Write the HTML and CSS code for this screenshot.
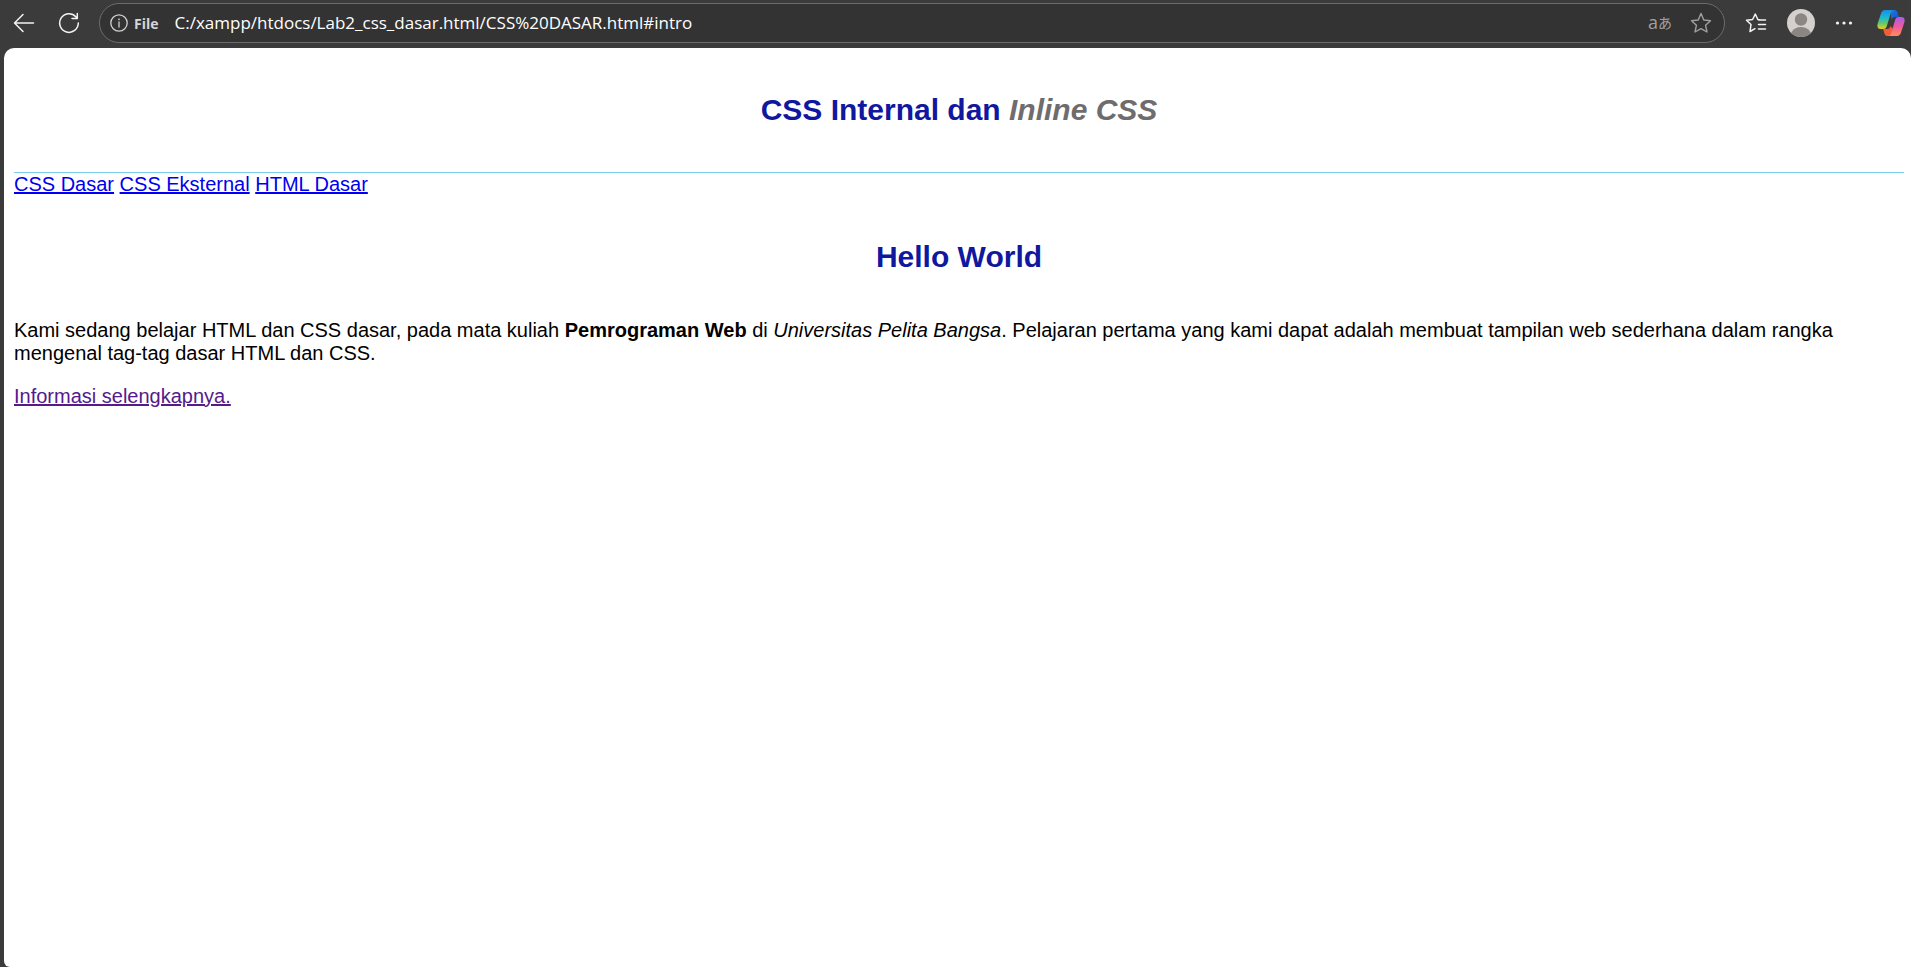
FILE: index.html
```html
<!DOCTYPE html>
<html lang="id">
<head>
<meta charset="utf-8">
<title>CSS Dasar</title>
<link rel="stylesheet" href="styles.css">
</head>
<body class="browser">
<div class="toolbar">
  <button class="tool back" type="button" aria-label="Back">
    <svg width="22" height="20" viewBox="0 0 22 20" fill="none" stroke="#f4f4f4" stroke-width="1.5" stroke-linecap="round" stroke-linejoin="round"><path d="M20.5 10H1.5M10 1.5 1.5 10l8.500 8.500"/></svg>
  </button>
  <button class="tool reload" type="button" aria-label="Refresh">
    <svg width="22" height="22" viewBox="0 0 22 22" fill="none" stroke="#f4f4f4" stroke-width="1.500" stroke-linecap="round" stroke-linejoin="round"><path d="M20.300 11A9.300 9.300 0 1 1 17.800 4.700L19.300 6.500M19.300 1.500V6.500H14"/></svg>
  </button>
  <div class="address">
    <button class="site" type="button">
      <svg width="18" height="18" viewBox="0 0 18 18" fill="none" stroke="#d0d0d0" stroke-width="1.300"><circle cx="9" cy="9" r="8.200"/><path d="M9 8v5" stroke-linecap="round"/><circle cx="9" cy="5.300" r=".9" fill="#d0d0d0" stroke="none"/></svg>
      <span>File</span>
    </button>
    <input class="url" type="text" aria-label="Address" value="C:/xampp/htdocs/Lab2_css_dasar.html/CSS%20DASAR.html#intro">
    <button class="tool translate" type="button" aria-label="Translate"><span class="latin">a</span><span class="kana">あ</span></button>
    <button class="tool" type="button" aria-label="Add to favorites">
      <svg width="22" height="22" viewBox="0 0 22 22" fill="none" stroke="#a0a0a0" stroke-width="1.400" stroke-linejoin="round"><path d="M11 1.500 13.800 8 20.500 8.700 15.600 13.300 17 20 11 16.700 5 20 6.400 13.300 1.500 8.700 8.200 8Z"/></svg>
    </button>
  </div>
  <div class="actions">
    <button class="tool" type="button" aria-label="Favorites">
      <svg width="22" height="22" viewBox="0 0 22 22" fill="none" stroke="#f4f4f4" stroke-width="1.500" stroke-linejoin="round" stroke-linecap="round"><path d="M15.500 8 12.800 7.500 10.300 2 7.600 7.500 1.500 8.300 6 12.500 5 19.500 10 16.700M13.500 8H20.500M13.500 12.500H20.500M13.500 17H20.500"/></svg>
    </button>
    <button class="tool profile" type="button" aria-label="Profile">
      <svg width="28" height="28" viewBox="0 0 28 28"><defs><clipPath id="disc"><circle cx="14" cy="14" r="14"/></clipPath></defs><circle cx="14" cy="14" r="14" fill="#d3d0cd"/><g fill="#8b8682" clip-path="url(#disc)"><circle cx="14" cy="10.500" r="6.200"/><ellipse cx="14" cy="26" rx="10" ry="8"/></g></svg>
    </button>
    <button class="tool" type="button" aria-label="Settings and more">
      <svg width="18" height="6" viewBox="0 0 18 6" fill="#f4f4f4"><circle cx="2.500" cy="3" r="1.600"/><circle cx="9" cy="3" r="1.600"/><circle cx="15.500" cy="3" r="1.600"/></svg>
    </button>
    <button class="tool copilot" type="button" aria-label="Copilot">
      <svg width="28" height="26" viewBox="0 0 28 26">
        <defs>
          <linearGradient id="cool" x1="0" y1="0" x2="0" y2="1"><stop offset="0" stop-color="#168ee8"/><stop offset=".35" stop-color="#18b5d8"/><stop offset=".7" stop-color="#62c96b"/><stop offset="1" stop-color="#f2cb20"/></linearGradient>
          <linearGradient id="warm" x1="0" y1="0" x2="0" y2="1"><stop offset="0" stop-color="#a95cf0"/><stop offset=".5" stop-color="#ed5b9f"/><stop offset="1" stop-color="#ff8d55"/></linearGradient>
          <linearGradient id="fold" x1="0" y1="0" x2="1" y2="1"><stop offset="0" stop-color="#167be8"/><stop offset="1" stop-color="#2148bd"/></linearGradient>
        </defs>
        <path d="M14 0h3.500c2 0 3 1.500 3.500 3.500L22 7h-3.500c-2.500 0-4 1-4.500 3Z" fill="url(#fold)"/>
        <path d="M14 26h-3.500C8 26 7.500 24 7 22l-1-3h4c2 0 3-1 3.500-3L16 19Z" fill="#f25b37"/>
        <path d="M8 0h9c-2 0-3 2-3.700 4.500L10 15.500C9.300 18 8.500 19 6 19H3.500C.5 19-.2 16.500.7 13.500L4 3.500C4.700 1.200 6 0 8 0Z" fill="url(#cool)"/>
        <path d="M20 26h-9c2 0 3-2 3.700-4.500L18 10.500C18.700 8 19.500 7 22 7h2.500c3 0 3.700 2.500 2.800 5.500L24 22.500c-.7 2.300-2 3.500-4 3.500Z" fill="url(#warm)"/>
      </svg>
    </button>
  </div>
</div>
<div class="page">
  <header class="masthead">
    <h1 class="title">CSS Internal dan <i class="inline-title">Inline CSS</i></h1>
  </header>
  <nav class="links">
    <a href="#dasar">CSS Dasar</a>
    <a href="#eksternal">CSS Eksternal</a>
    <a href="#html">HTML Dasar</a>
  </nav>
  <main id="intro">
    <h1 class="title">Hello World</h1>
    <p class="text">Kami sedang belajar HTML dan CSS dasar, pada mata kuliah <b>Pemrograman Web</b> di <i>Universitas Pelita Bangsa</i>. Pelajaran pertama yang kami dapat adalah membuat tampilan web sederhana dalam rangka mengenal tag-tag dasar HTML dan CSS.</p>
    <a class="more" href="#selengkapnya">Informasi selengkapnya.</a>
  </main>
</div>
</body>
</html>
```
FILE: styles.css
```css
* {
  box-sizing: border-box;
}

.browser {
  display: flex;
  flex-direction: column;
  min-height: 100vh;
  margin: 0;
  background: #3b3b3b;
  font-family: "Liberation Sans", Arial, sans-serif;
  font-size: 20px;
  line-height: normal;
}

.toolbar {
  display: flex;
  align-items: center;
  height: 48px;
  padding: 0 6px 2px 13px;
  font-family: "Open Sans", "Noto Sans", sans-serif;
}

.tool,
.site {
  display: flex;
  align-items: center;
  flex: none;
  padding: 0;
  border: 0;
  background: none;
  font-family: inherit;
}

.reload {
  margin: 0 19px 0 23px;
}

.address {
  display: flex;
  align-items: center;
  flex: 1;
  height: 40px;
  padding: 0 12px 0 10px;
  border: 1px solid #6c6c6c;
  border-radius: 20px;
  background: #333;
}

.site {
  gap: 6px;
  color: #d6d6d6;
  font-size: 14px;
  font-weight: 700;
}

.url {
  flex: 1;
  min-width: 0;
  margin-left: 16px;
  padding: 0 0 2px;
  border: 0;
  outline: 0;
  background: none;
  color: #fff;
  font-family: inherit;
  font-size: 17px;
}

.translate {
  margin-right: 18px;
  padding-bottom: 2px;
  color: #a0a0a0;
  line-height: 24px;
}

.latin {
  font-size: 18px;
}

.kana {
  font-family: "Noto Sans CJK JP", sans-serif;
  font-size: 14px;
}

.actions {
  display: flex;
  align-items: center;
  gap: 20px;
  margin-left: 20px;
}

.copilot {
  margin-left: 4px;
}

.page {
  flex: 1;
  margin-left: 4px;
  padding: 0 7px 10px 10px;
  border-radius: 10px 10px 0 6px;
  background: #fff;
  color: #000;
}

.masthead {
  padding: 45px 0;
  border-bottom: 1px solid #77ccef;
}

.title {
  margin: 0;
  color: #0f189f;
  font-size: 30px;
  line-height: 34px;
  text-align: center;
}

.inline-title {
  color: #6f6c6d;
}

.links {
  padding-bottom: 44px;
}

.text {
  margin: 45px 0 20px;
}

a {
  color: #0000ee;
}

.more {
  color: #551a8b;
}
```
